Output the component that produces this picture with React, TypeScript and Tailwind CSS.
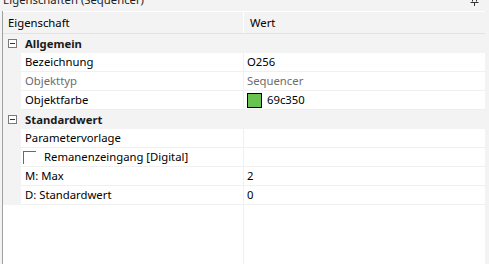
import type { ReactNode } from "react";

type Row =
  | { kind: "cat"; label: string }
  | { kind: "prop"; name: string; value?: ReactNode; muted?: boolean; check?: boolean };

const ROWS: Row[] = [
  { kind: "cat", label: "Allgemein" },
  { kind: "prop", name: "Bezeichnung", value: "O256" },
  { kind: "prop", name: "Objekttyp", value: "Sequencer", muted: true },
  { kind: "prop", name: "Objektfarbe", value: "color" },
  { kind: "cat", label: "Standardwert" },
  { kind: "prop", name: "Parametervorlage" },
  { kind: "prop", name: "Remanenzeingang [Digital]", check: true },
  { kind: "prop", name: "M: Max", value: "2" },
  { kind: "prop", name: "D: Standardwert", value: "0" },
];

function MinusBox() {
  return (
    <div className="w-[9px] h-[9px] border border-[#7a7a7a] bg-white flex items-center justify-center">
      <div className="w-[5px] h-px bg-[#333]" />
    </div>
  );
}

function PinIcon() {
  return (
    <svg width="9" height="6" viewBox="0 0 9 6" className="mr-[10px]">
      <path d="M2.5 -3 V1.5 M6.5 -3 V1.5 M0.5 2.5 H8.5 M4.5 2.5 V6" stroke="#333" strokeWidth="1" fill="none" />
    </svg>
  );
}

function CategoryRow({ label }: { label: string }) {
  return (
    <div className="h-[19px] bg-[#f3f3f3] flex items-center">
      <div className="w-[18px] flex justify-center pl-px">
        <MinusBox />
      </div>
      <span className="pl-[4px] font-bold text-[#1a1a1a]">{label}</span>
    </div>
  );
}

function PropRow({ row }: { row: Extract<Row, { kind: "prop" }> }) {
  const tone = row.muted ? "text-[#6d6d6d]" : "text-black";
  return (
    <div className="h-[19px] flex">
      <div className="w-[18px] bg-[#f3f3f3]" />
      <div className={`w-[222px] border-b border-[#f0f0f0] flex items-center pl-[4px] ${tone}`}>
        {row.check ? (
          <>
            <span className="-ml-[2px] w-[13px] h-[13px] border-t border-l border-[#6a6a6a] mr-[8px]" />
            {row.name}
          </>
        ) : (
          row.name
        )}
      </div>
      <div className="w-px bg-[#f0f0f0]" />
      <div className={`flex-1 border-b border-[#f0f0f0] flex items-center pl-[3px] ${tone}`}>
        {row.value === "color" ? (
          <>
            <span className="w-[15px] h-[15px] bg-[#69c350] border border-black mr-[5px]" />
            69c350
          </>
        ) : (
          row.value
        )}
      </div>
    </div>
  );
}

export default function App() {
  return (
    <div className="w-[489px] h-[264px] bg-[#f3f3f3] overflow-hidden font-['Segoe_UI','Noto_Sans',sans-serif] text-[11.3px] leading-[16px] text-black">
      <div className="h-[11px] overflow-hidden flex justify-between items-start pl-[3px]">
        <div className="-mt-[8px] text-[#1e1e1e]">Eigenschaften (Sequencer)</div>
        <PinIcon />
      </div>

      <div className="ml-[2px] w-[483px] h-[253px] border-l border-[#a0a0a0] bg-white pt-px flex flex-col">
        {/* column headers */}
        <div className="h-[22px] bg-[#f3f3f3] border-b border-[#e3e3e3] flex items-center">
          <div className="w-[240px] pl-[5px]">Eigenschaft</div>
          <div className="w-px h-full bg-white" />
          <div className="pl-[6px]">Wert</div>
        </div>

        {ROWS.map((row, i) =>
          row.kind === "cat" ? <CategoryRow key={i} label={row.label} /> : <PropRow key={i} row={row} />
        )}

        {/* empty space below rows */}
        <div className="flex-1 flex">
          <div className="w-[240px]" />
          <div className="w-px bg-[#f0f0f0]" />
        </div>
      </div>
    </div>
  );
}
